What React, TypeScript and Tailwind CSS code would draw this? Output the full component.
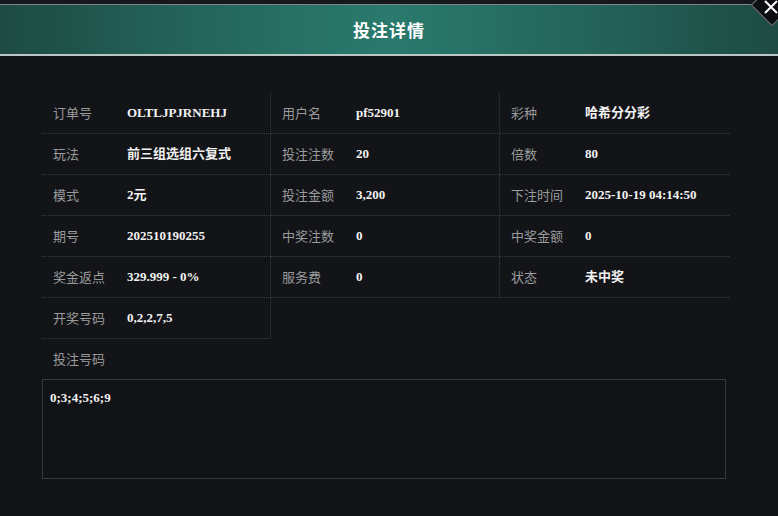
import React from 'react';

type Item = { label: string; value: string };

const rows: Item[][] = [
  [
    { label: '订单号', value: 'OLTLJPJRNEHJ' },
    { label: '用户名', value: 'pf52901' },
    { label: '彩种', value: '哈希分分彩' },
  ],
  [
    { label: '玩法', value: '前三组选组六复式' },
    { label: '投注注数', value: '20' },
    { label: '倍数', value: '80' },
  ],
  [
    { label: '模式', value: '2元' },
    { label: '投注金额', value: '3,200' },
    { label: '下注时间', value: '2025-10-19 04:14:50' },
  ],
  [
    { label: '期号', value: '202510190255' },
    { label: '中奖注数', value: '0' },
    { label: '中奖金额', value: '0' },
  ],
  [
    { label: '奖金返点', value: '329.999 - 0%' },
    { label: '服务费', value: '0' },
    { label: '状态', value: '未中奖' },
  ],
  [{ label: '开奖号码', value: '0,2,2,7,5' }],
];

const sans = "font-['Noto_Sans_CJK_SC','Noto_Sans',sans-serif]";
const serif = "font-['Liberation_Serif','Noto_Sans_CJK_SC',serif]";

const Cell: React.FC<{ item: Item; col: number }> = ({ item, col }) => (
  <div
    className={`flex h-[41px] items-center border-b border-dotted border-[#393c42] ${
      col < 2 ? 'border-r' : ''
    }`}
  >
    <span className={`w-[85px] shrink-0 pl-[11px] text-[13px] text-[#9a9b9d] ${sans}`}>
      {item.label}
    </span>
    <span className={`text-[13px] font-bold text-[#f2f2f2] ${serif}`}>{item.value}</span>
  </div>
);

export default function App() {
  return (
    <div className="relative h-[516px] w-[778px] overflow-hidden bg-[#121417]">
      <div className="h-[4px] bg-[#16181e]" />
      <div className="flex h-[52px] items-center justify-center border-t border-b-2 border-t-[#7d8885] border-b-[#b9c6c3] bg-[linear-gradient(90deg,#1e4c45_0%,#1f5249_8%,#236057_20%,#2a7a6d_50%,#236057_80%,#1f5249_92%,#1e4c45_100%)]">
        <span className={`text-[17px] font-bold tracking-[1px] text-white ${sans}`}>投注详情</span>
      </div>

      {/* close button */}
      <div className="absolute left-[757px] top-[-10px] h-[30px] w-[30px] rotate-45 border border-[#6f7477] bg-[#0d0e11]" />
      <svg className="absolute left-[763px] top-[0px]" width="16" height="16" viewBox="0 0 16 16">
        <path d="M2 1 L14 13 M14 1 L2 13" stroke="#ffffff" strokeWidth="2" />
      </svg>

      <div className="mt-[37px] px-[42px]">
        <div className="grid w-[687px] grid-cols-3">
          {rows.map((row, r) =>
            row.map((item, c) => <Cell key={`${r}-${c}`} item={item} col={c} />)
          )}
        </div>
        <div className={`flex h-[40px] items-center pl-[11px] text-[13px] text-[#9a9b9d] ${sans}`}>
          投注号码
        </div>
        <div className="h-[100px] w-[684px] border border-[#34373b] bg-[#111316] px-[7px] pt-[8px]">
          <div className={`text-[13px] font-bold leading-[20px] text-[#f2f2f2] ${serif}`}>0;3;4;5;6;9</div>
        </div>
      </div>
    </div>
  );
}
